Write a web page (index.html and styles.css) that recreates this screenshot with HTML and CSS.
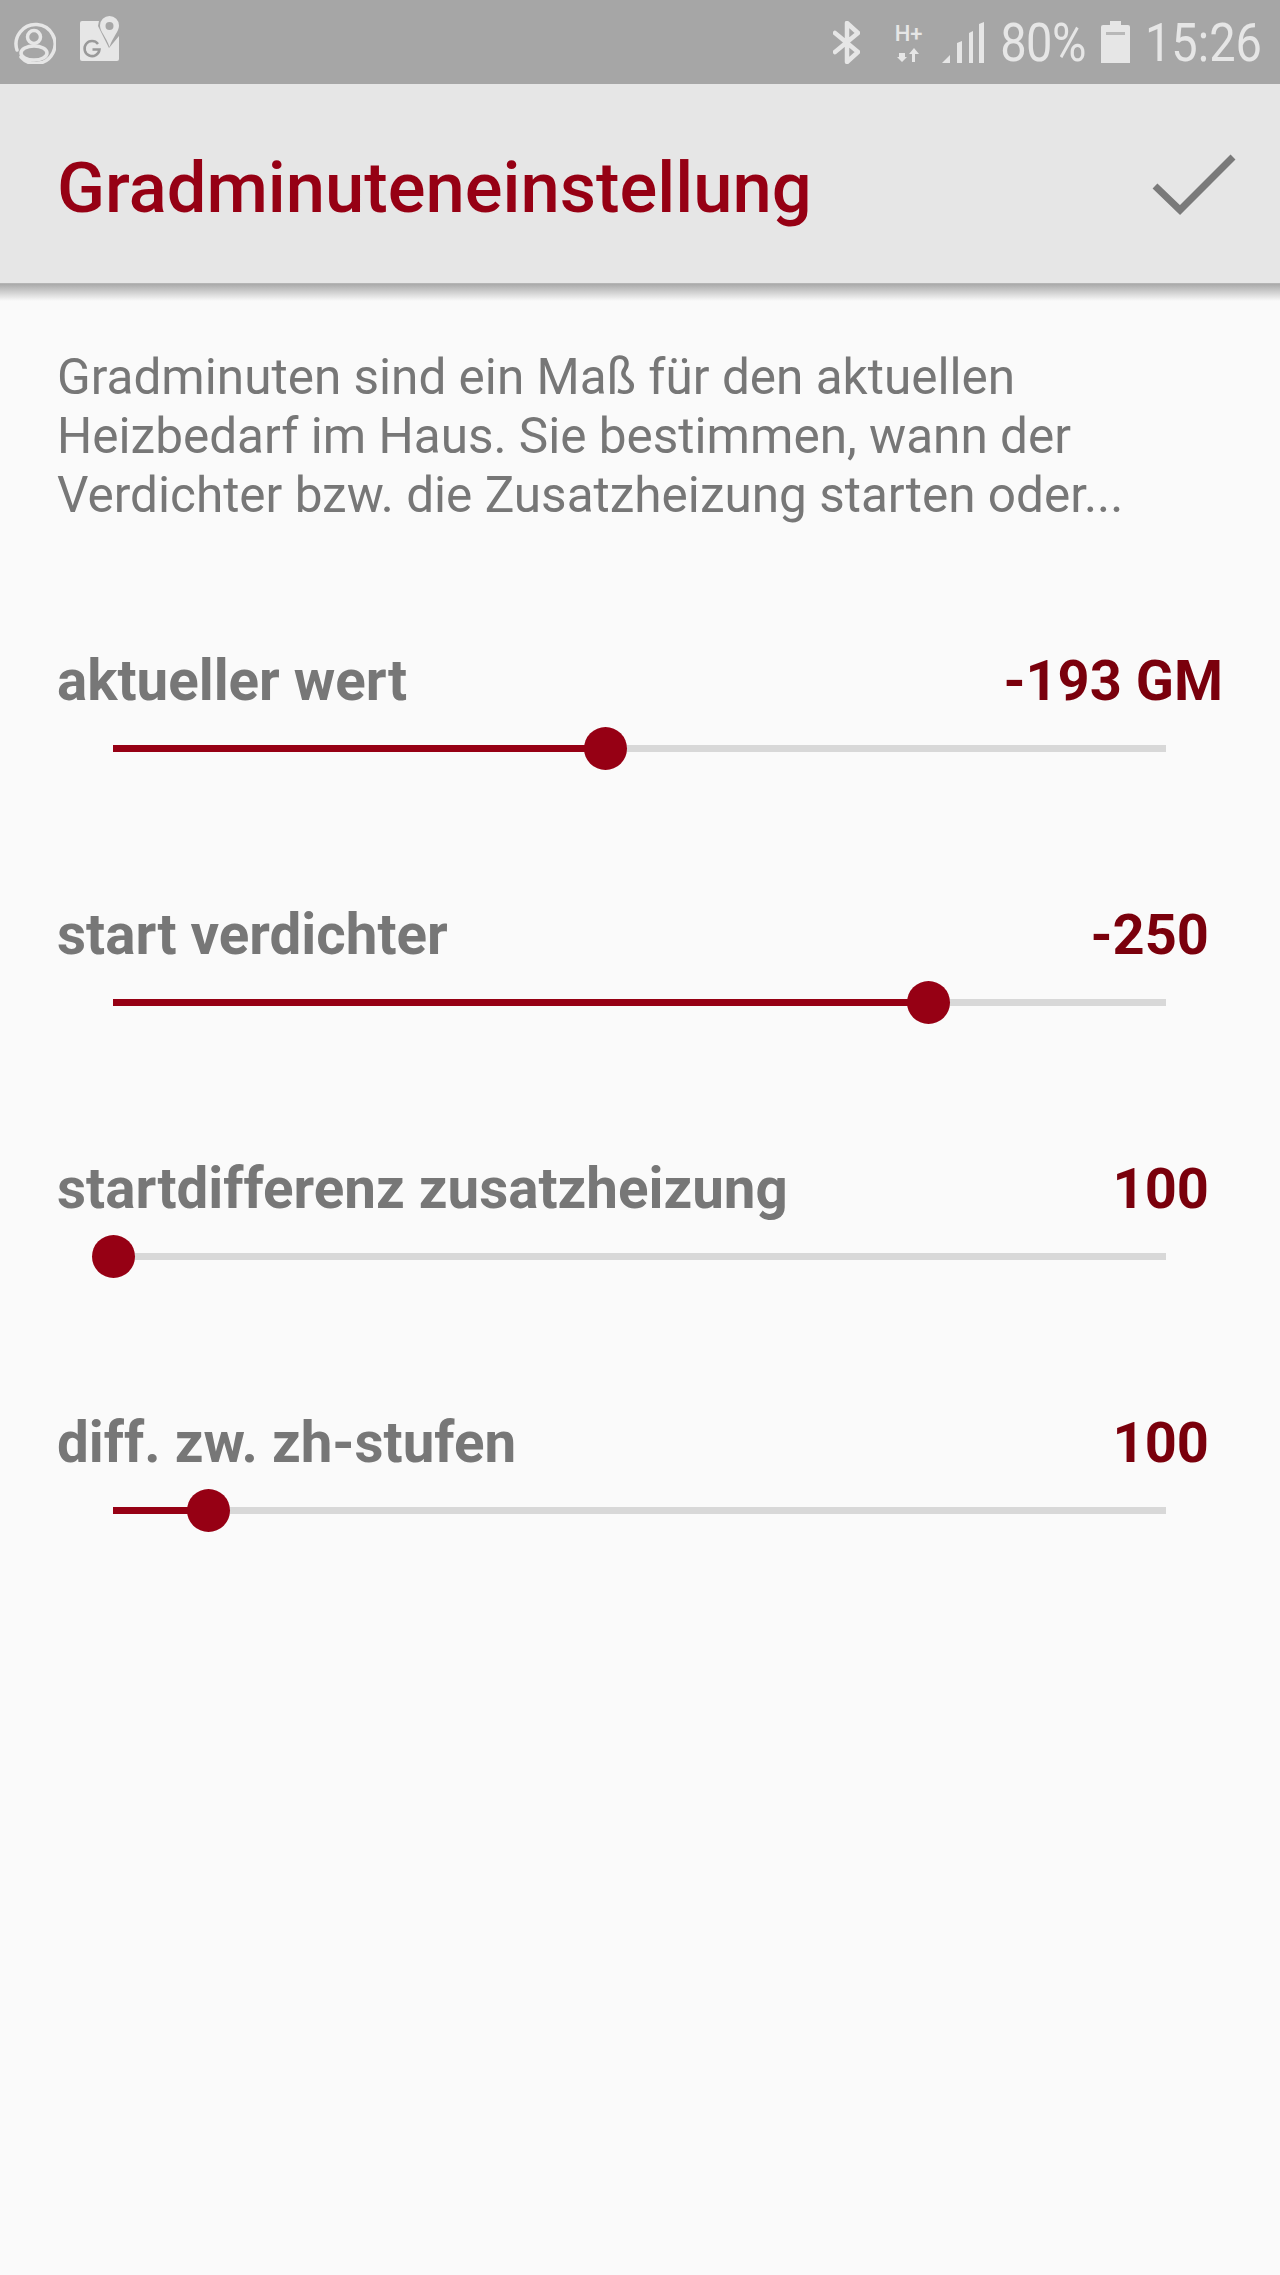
FILE: index.html
```html
<!DOCTYPE html>
<html lang="de">
<head>
<meta charset="utf-8">
<title>Gradminuteneinstellung</title>
<link rel="stylesheet" href="styles.css">
</head>
<body>
<div class="status">
  <div class="status-left">
    <svg class="ic-user" viewBox="0 0 44 44"><path d="M5 30A19.500 19.500 0 1 1 9 37" fill="none" stroke="#e6e6e6" stroke-width="3.500" stroke-linecap="round"/><circle cx="22" cy="17" r="6.500" fill="none" stroke="#e6e6e6" stroke-width="3.500"/><ellipse cx="22" cy="33" rx="13" ry="7" fill="none" stroke="#e6e6e6" stroke-width="3.500"/></svg>
    <svg class="ic-maps" viewBox="0 0 39 45"><path d="M2 5h17l-1 5 11 22 10-12v23a2 2 0 0 1-2 2H2a2 2 0 0 1-2-2V7a2 2 0 0 1 2-2z" fill="#e6e6e6"/><path d="M29.500 0a9.500 9.500 0 0 1 9.500 9.500c0 6-6 11-9.500 21.500-3.500-10.500-9.500-15.500-9.500-21.500A9.500 9.500 0 0 1 29.500 0z" fill="#e6e6e6"/><circle cx="29.500" cy="10" r="4" fill="#a6a6a6"/><path d="M18 28a7.500 7.500 0 1 0 1.500 5.500h-7" fill="none" stroke="#999" stroke-width="2.500"/></svg>
  </div>
  <div class="status-right">
    <svg class="ic-bt" viewBox="0 0 27 43"><path d="M2 12l23 19-11 10V2l11 10L2 31" fill="none" stroke="#e6e6e6" stroke-width="4.500" stroke-linejoin="round" stroke-linecap="round"/></svg>
    <div class="net"><span class="net-h">H+</span><svg class="ic-arrows" viewBox="0 0 24 14"><path d="M2 5v4H0l5 5 5-5H8V5zM18 14V6h4l-5-6-5 6h3v8z" fill="#e6e6e6"/></svg></div>
    <svg class="ic-signal" viewBox="0 0 42 41"><path d="M0 41l8-8v8zM15 21l5-2v22h-5zM27 11l4-2v32h-4zM37 2l5-2v41h-5z" fill="#e6e6e6"/></svg>
    <span class="pct">80%</span>
    <svg class="ic-batt" viewBox="0 0 29 42"><path d="M9 0h11v4h7a2 2 0 0 1 2 2v36H0V6a2 2 0 0 1 2-2h7z" fill="#e6e6e6"/><path d="M5 11h19v3H5z" fill="#b8b8b8"/></svg>
    <span class="time">15:26</span>
  </div>
</div>
<header class="bar">
  <h1 class="title">Gradminuteneinstellung</h1>
  <svg class="ic-check" viewBox="0 0 84 62"><path d="M3 33l25 24L81 4" fill="none" stroke="#7a7a7a" stroke-width="7"/></svg>
</header>
<main class="content">
  <p class="intro">Gradminuten sind ein Maß für den aktuellen<br>Heizbedarf im Haus. Sie bestimmen, wann der<br>Verdichter bzw. die Zusatzheizung starten oder...</p>
  <section class="row">
    <div class="row-head wide"><span class="label">aktueller wert</span><span class="value">-193 GM</span></div>
    <div class="slider"><div class="fill" style="width:46.800%"></div><div class="thumb" style="left:46.800%"></div></div>
  </section>
  <section class="row">
    <div class="row-head"><span class="label">start verdichter</span><span class="value">-250</span></div>
    <div class="slider"><div class="fill" style="width:77.400%"></div><div class="thumb" style="left:77.400%"></div></div>
  </section>
  <section class="row">
    <div class="row-head"><span class="label">startdifferenz zusatzheizung</span><span class="value">100</span></div>
    <div class="slider"><div class="fill" style="width:0"></div><div class="thumb" style="left:0"></div></div>
  </section>
  <section class="row">
    <div class="row-head"><span class="label">diff. zw. zh-stufen</span><span class="value">100</span></div>
    <div class="slider"><div class="fill" style="width:9.100%"></div><div class="thumb" style="left:9.100%"></div></div>
  </section>
</main>
</body>
</html>
```
FILE: styles.css
```css
html, body { margin: 0; padding: 0; }
body {
  width: 1280px;
  height: 2275px;
  overflow: hidden;
  background: #fafafa;
  font-family: Roboto, "Liberation Sans", sans-serif;
}
.status {
  height: 84px;
  background: #a6a6a6;
  display: flex;
  justify-content: space-between;
  align-items: center;
  box-sizing: border-box;
  padding: 0 18px 0 12px;
}
.status-left { display: flex; align-items: flex-start; gap: 24px; }
.status-right { display: flex; align-items: center; color: #e6e6e6; }
.ic-user { width: 44px; height: 44px; }
.ic-maps { width: 39px; height: 45px; margin-top: -4px; }
.ic-bt { width: 27px; height: 43px; margin-right: 34px; }
.net { display: flex; flex-direction: column; align-items: center; width: 29px; margin-right: 19px; }
.net-h { font-size: 22px; font-weight: 500; line-height: 22px; }
.ic-arrows { width: 24px; height: 14px; margin-top: 3px; }
.ic-signal { width: 42px; height: 41px; margin-right: 16px; }
.pct, .time { font-size: 47px; line-height: 84px; transform: scaleY(1.16); }
.pct { margin-right: 15px; letter-spacing: -0.5px; }
.ic-batt { width: 29px; height: 42px; margin-right: 15px; }
.bar {
  height: 199px;
  background: #e6e6e6;
  border-bottom: 1px solid #b4b4b4;
  display: flex;
  justify-content: space-between;
  align-items: center;
  padding: 0 44px 0 57px;
  position: relative;
}
.bar::after {
  content: "";
  position: absolute;
  left: 0;
  right: 0;
  top: 100%;
  height: 17px;
  margin-top: 1px;
  background: linear-gradient(#a9a9a9, #fafafa);
}
.title {
  margin: 9px 0 0;
  font-size: 70.500px;
  font-weight: 500;
  color: #960014;
}
.ic-check { width: 84px; height: 62px; }
.content { padding: 0 57px; }
.intro {
  margin: 0 0 70px;
  padding-top: 64px;
  font-size: 49.500px;
  line-height: 59px;
  color: #777;
}
.row { height: 254px; }
.row-head {
  display: flex;
  justify-content: space-between;
  align-items: baseline;
  margin-right: 14px;
  padding-top: 51px;
  line-height: 70px;
}
.row-head.wide { margin-right: 0; }
.label { font-size: 56.500px; font-weight: 700; color: #777; }
.value { font-size: 56px; font-weight: 700; color: #7a000c; }
.slider {
  position: relative;
  margin: 29px 57px 0 56px;
  height: 7px;
  background: #d8d8d8;
}
.fill { height: 100%; background: #960014; }
.thumb {
  position: absolute;
  top: 50%;
  width: 43px;
  height: 43px;
  margin: -21.500px 0 0 -21.500px;
  border-radius: 50%;
  background: #960014;
}
```
